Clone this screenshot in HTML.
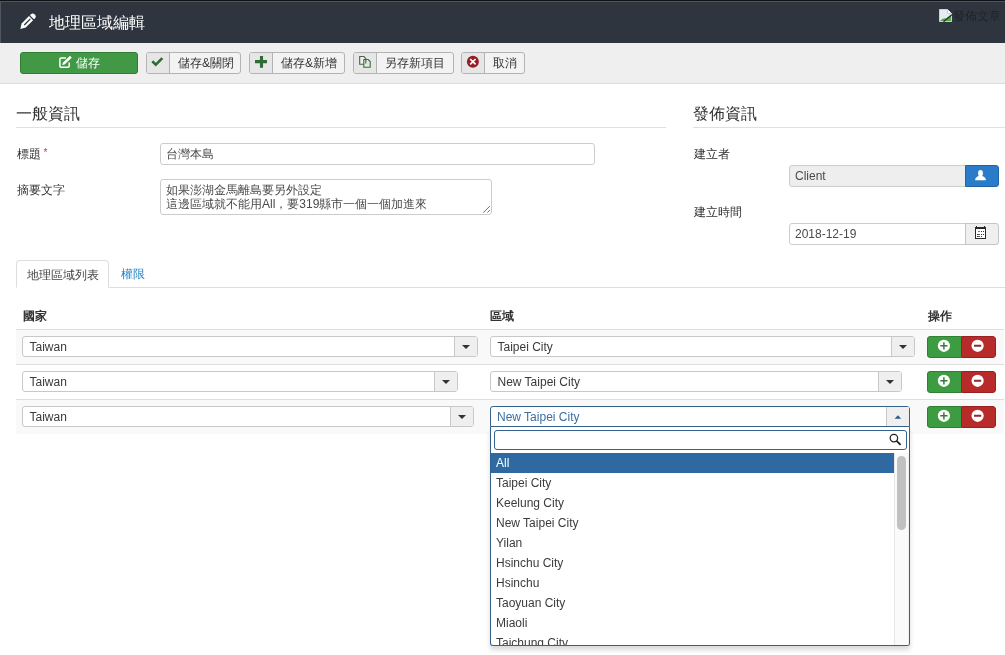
<!DOCTYPE html>
<html><head><meta charset="utf-8">
<style>
*{box-sizing:border-box}
html,body{margin:0;padding:0;width:1005px;height:655px;overflow:hidden;background:#fff}
body{font-family:"Liberation Sans",sans-serif;font-size:12px;color:#333;position:relative}
.a{position:absolute}
svg{position:absolute;display:block}
#hdr{left:0;top:0;width:1005px;height:43px;background:#2e353e;border-top:1px solid #0d1217}
#hdr .title{left:49px;top:11px;font-size:16px;color:#fff;line-height:22px;white-space:nowrap}
#tb{left:0;top:43px;width:1005px;height:41px;background:#efefef;border-bottom:1px solid #dcdcdc}
.btn{position:absolute;top:52px;height:22px;border:1px solid #b3b3b3;border-radius:3px;background:#f3f3f3;color:#333;font-size:12px;line-height:20px;white-space:nowrap;overflow:hidden}
.btn .ic{position:absolute;left:0;top:0;width:23px;height:20px;background:#e6e6e6;border-right:1px solid #b3b3b3}
.btn .tx{position:absolute;top:0}
.btn.g{background:#419945;border-color:#2f7d33;color:#fff}
.leg{font-size:15.5px;line-height:21px;color:#333;white-space:nowrap}
.hr{height:1px;background:#e0e0e0}
.lbl{line-height:16px;white-space:nowrap}
.inp{position:absolute;color:#4a4a4a;border:1px solid #ccc;border-radius:3px;background:#fff;height:22px;line-height:20px;padding-left:5px;white-space:nowrap}
.tab{left:16px;top:260px;width:93px;height:28px;border:1px solid #ddd;border-bottom-color:#fff;border-radius:4px 4px 0 0;background:#fff}
.th{font-weight:bold;line-height:16px}
.row{left:16px;width:988px;height:35px;border-top:1px solid #ddd}
.sel{position:absolute;height:21px;border:1px solid #c8c8c8;border-radius:3px;background:#fff;line-height:21px;padding-left:6.5px;color:#3a3a3a;white-space:nowrap}
.sel .arr{position:absolute;right:0;top:0;width:23px;height:19px;background:#efefef;border-left:1px solid #c8c8c8}
.sel .arr.up:after{display:none}
.sel .arr:after{content:"";position:absolute;left:7px;top:8px;border-left:4px solid transparent;border-right:4px solid transparent;border-top:4px solid #333}
.bg{position:absolute;top:0;height:22px;width:69px;border-radius:3px;overflow:hidden}
.bg svg{left:0;top:0}
.bg .p{position:absolute;left:0;top:0;width:34px;height:22px;background:#3d9b41;border:1px solid #2f8033;border-right:0;border-radius:3px 0 0 3px}
.bg .m{position:absolute;left:34px;top:0;width:35px;height:22px;background:#b72b2b;border:1px solid #992020;border-radius:0 3px 3px 0}
.drop{left:490px;top:427px;width:420px;height:219px;border:1px solid #36618c;border-top:0;background:#fff;border-radius:0 0 3px 3px;overflow:hidden;box-shadow:0 4px 5px rgba(0,0,0,.15)}
.opt{position:absolute;left:5px;height:20px;line-height:20px;white-space:nowrap;color:#3c3c3c}
</style></head><body><div id="w" style="position:absolute;left:0;top:0;width:1005px;height:655px;will-change:transform">
<div id="hdr" class="a">

  <div class="a title">地理區域編輯</div>
</div>
<svg style="left:0;top:0" width="60" height="43" viewBox="0 0 60 43"><g transform="translate(20.3,28.9) rotate(-45)"><path d="M0 0 L4.8 -2.9 L15.2 -2.9 L15.2 2.9 L4.8 2.9 Z" fill="#fff"/><path d="M16.5 -2.9 L17.6 -2.9 A2.9 2.9 0 0 1 17.6 2.9 L16.5 2.9 Z" fill="#fff"/><rect x="5.6" y="-0.65" width="8.6" height="1.3" fill="#2e343b"/></g></svg>
<div class="a" style="left:0;top:1px;width:1005px;height:1px;background:#4f555c"></div>
<div class="a" style="left:0;top:2px;width:1px;height:41px;background:#50565d"></div>
<svg style="left:939px;top:9px" width="14" height="14" viewBox="0 0 14 14"><path d="M0.5 0.5 H8.5 L12.5 4.5 V12.5 H0.5 Z" fill="#e6ecf2" stroke="#c9d0d6"/><path d="M8.5 0.5 V4.5 H12.5" fill="#fff" stroke="#c9d0d6"/><path d="M1 12 Q3.5 8.5 7 9.5 L12 6 V12 Z" fill="#5aa545"/><path d="M4.5 12.8 L12.8 5.8" stroke="#22313a" stroke-width="1.2"/></svg>
<div class="a" style="left:953px;top:9px;font-size:12px;line-height:14px;color:#1e2329;white-space:nowrap">發佈文章</div>
<div id="tb" class="a"></div>
<div class="btn g" style="left:20px;width:118px"><span class="tx" style="left:55px">儲存</span></div>
<svg style="left:58px;top:55px" width="14" height="14" viewBox="0 0 14 14"><path d="M8 3 H3.1 Q1.9 3 1.9 4.2 V11 Q1.9 12.2 3.1 12.2 H10 Q11.2 12.2 11.2 11 V7.5" fill="none" stroke="#fff" stroke-width="1.5"/><path d="M4.2 10 L4.78 7.69 L12.02 0.85 L13.78 2.75 L6.54 9.59 Z" fill="#fff"/></svg>
<div class="btn" style="left:146px;width:95px"><span class="ic"></span><span class="tx" style="left:31px">儲存&amp;關閉</span></div>
<svg style="left:148px;top:53px" width="18" height="16" viewBox="148 53 18 16"><path d="M152.3 61.3 L155.8 64.6 L162.3 58.1" fill="none" stroke="#2e6b35" stroke-width="2.6"/></svg>
<div class="btn" style="left:249px;width:96px"><span class="ic"></span><span class="tx" style="left:31px">儲存&amp;新增</span></div>
<svg style="left:250px;top:50px" width="22" height="22" viewBox="250 50 22 22"><path d="M261.5 56 V67.7 M255 61.6 H267" stroke="#2e6b35" stroke-width="3.1"/></svg>
<div class="btn" style="left:353px;width:101px"><span class="ic"></span><span class="tx" style="left:31px">另存新項目</span></div>
<svg style="left:358px;top:55px" width="14" height="14" viewBox="0 0 14 14"><path d="M1.7 1.5 H5.8 L7.8 3.5 V9.2 H1.7 Z" fill="#eef2ee"/><path d="M5.8 4.5 H10.2 L12.2 6.5 V12.2 H5.8 Z" fill="#d6f2d6"/><path d="M7.8 8.6 V3.5 L5.8 1.5 H1.7 V9.2 H5.8" fill="none" stroke="#4d5f4d" stroke-width="1.1"/><path d="M5.8 4.5 H10.2 L12.2 6.5 V12.2 H5.8 Z" fill="none" stroke="#4d5f4d" stroke-width="1.1"/></svg>
<div class="btn" style="left:461px;width:64px"><span class="ic"></span><span class="tx" style="left:31px">取消</span></div>
<svg style="left:464px;top:53px" width="18" height="18" viewBox="464 53 18 18"><circle cx="472.9" cy="61.7" r="6" fill="#9a1b24"/><path d="M470.2 59 L475.6 64.4 M475.6 59 L470.2 64.4" stroke="#fff" stroke-width="1.7"/></svg>

<!-- general -->
<div class="a leg" style="left:16px;top:103px">一般資訊</div>
<div class="a hr" style="left:16px;top:127px;width:650px"></div>
<div class="a lbl" style="left:17px;top:146px">標題</div><div class="a lbl" style="left:43.5px;top:145px;color:#d4343a;font-size:10px">*</div>
<div class="inp" style="left:160px;top:143px;width:435px">台灣本島</div>
<div class="a lbl" style="left:17px;top:182px">摘要文字</div>
<div class="inp" style="left:160px;top:179px;width:332px;height:36px;line-height:14px;padding-top:3.4px">如果澎湖金馬離島要另外設定<br>這邊區域就不能用All，要319縣市一個一個加進來</div>

<svg style="left:480px;top:203px" width="12" height="12" viewBox="480 203 12 12"><path d="M483.3 212.6 L489.8 206.1 M487.3 212.6 L489.8 210.1" stroke="#666" stroke-width="0.95"/></svg>
<!-- publishing -->
<div class="a leg" style="left:693px;top:103px">發佈資訊</div>
<div class="a hr" style="left:693px;top:127px;width:312px"></div>
<div class="a lbl" style="left:694px;top:146px">建立者</div>
<div class="inp" style="left:789px;top:165px;width:177px;background:#eee;border-radius:3px 0 0 3px">Client</div>
<div class="a" style="left:965px;top:165px;width:34px;height:22px;background:#2a7cc9;border:1px solid #1f64a6;border-radius:0 3px 3px 0"></div>
<svg style="left:970px;top:168px" width="20" height="16" viewBox="970 168 20 16"><ellipse cx="980.5" cy="173.2" rx="2.4" ry="3.2" fill="#fff"/><path d="M978.7 175.7 Q976.2 176.9 975.1 179.3 Q974.8 180.2 975.7 180.2 H985.3 Q986.2 180.2 985.9 179.3 Q984.8 176.9 982.3 175.7 Z" fill="#fff"/></svg>
<div class="a lbl" style="left:694px;top:204px">建立時間</div>
<div class="inp" style="left:789px;top:223px;width:177px;border-radius:3px 0 0 3px">2018-12-19</div>
<div class="a" style="left:965px;top:223px;width:34px;height:22px;background:#efefef;border:1px solid #c4c4c4;border-radius:0 3px 3px 0"></div>
<svg style="left:970px;top:224px" width="20" height="18" viewBox="970 224 20 18" shape-rendering="crispEdges"><rect x="976" y="229" width="9" height="9" fill="#fff"/><g fill="#2a2a2a"><rect x="975" y="227" width="11" height="2.4"/><rect x="975" y="229" width="1" height="10"/><rect x="985" y="229" width="1" height="10"/><rect x="975" y="238" width="11" height="1"/><rect x="976" y="226" width="1" height="1"/><rect x="984" y="226" width="1" height="1"/></g><g fill="#333"><rect x="978" y="231" width="2" height="1.3" fill="#777"/><rect x="981" y="231" width="1" height="1.3"/><rect x="983" y="231" width="1" height="1.3"/><rect x="976.5" y="233.5" width="1" height="1"/><rect x="978" y="233.5" width="2" height="1" fill="#555"/><rect x="981" y="233.5" width="1" height="1"/><rect x="983" y="233.5" width="1" height="1"/><rect x="976.5" y="235.8" width="1" height="1"/><rect x="978" y="235.8" width="2" height="1" fill="#555"/><rect x="981" y="235.8" width="1" height="1"/></g></svg>

<!-- tabs -->
<div class="a hr" style="left:16px;top:287px;width:989px;background:#ddd"></div>
<div class="a tab"></div>
<div class="a lbl" style="left:27px;top:266.5px;color:#444">地理區域列表</div>
<div class="a lbl" style="left:121px;top:266px;color:#2a86c6">權限</div>

<!-- table -->
<div class="a th" style="left:23px;top:308px">國家</div>
<div class="a th" style="left:490px;top:308px">區域</div>
<div class="a th" style="left:928px;top:308px">操作</div>
<div class="a row" style="top:329px;background:#f9f9f9"></div>
<div class="a row" style="top:364px;background:#fff"></div>
<div class="a row" style="top:399px;background:#f9f9f9"></div>

<div class="sel" style="left:22px;top:336px;width:456px">Taiwan<span class="arr"></span></div>
<div class="sel" style="left:490px;top:336px;width:425px">Taipei City<span class="arr"></span></div>
<div class="a" style="left:927px;top:336px"><div class="bg"><div class="p"></div><div class="m"></div><svg width="69" height="22" viewBox="0 0 69 22"><circle cx="16.9" cy="9.8" r="6.1" fill="#fff"/><path d="M16.9 6.2 V13.4 M13.3 9.8 H20.5" stroke="#2f7a35" stroke-width="1.45"/><circle cx="50.6" cy="9.8" r="6.1" fill="#fff"/><path d="M47 9.8 H54.2" stroke="#8e2a2a" stroke-width="2.1"/></svg></div></div>

<div class="sel" style="left:22px;top:371px;width:436px">Taiwan<span class="arr"></span></div>
<div class="sel" style="left:490px;top:371px;width:412px">New Taipei City<span class="arr"></span></div>
<div class="a" style="left:927px;top:371px"><div class="bg"><div class="p"></div><div class="m"></div><svg width="69" height="22" viewBox="0 0 69 22"><circle cx="16.9" cy="9.8" r="6.1" fill="#fff"/><path d="M16.9 6.2 V13.4 M13.3 9.8 H20.5" stroke="#2f7a35" stroke-width="1.45"/><circle cx="50.6" cy="9.8" r="6.1" fill="#fff"/><path d="M47 9.8 H54.2" stroke="#8e2a2a" stroke-width="2.1"/></svg></div></div>

<div class="sel" style="left:22px;top:406px;width:452px">Taiwan<span class="arr"></span></div>
<div class="sel" style="left:490px;top:406px;width:420px;border-color:#36618c;color:#3a6ea5;border-radius:3px 3px 0 0;padding-left:6px">New Taipei City<span class="arr up"></span></div>
<svg style="left:890px;top:412px" width="16" height="10" viewBox="890 412 16 10"><path d="M894.6 418.8 L897.9 415.3 L901.2 418.8 Z" fill="#2b5a8a"/></svg>

<div class="a" style="left:927px;top:406px"><div class="bg"><div class="p"></div><div class="m"></div><svg width="69" height="22" viewBox="0 0 69 22"><circle cx="16.9" cy="9.8" r="6.1" fill="#fff"/><path d="M16.9 6.2 V13.4 M13.3 9.8 H20.5" stroke="#2f7a35" stroke-width="1.45"/><circle cx="50.6" cy="9.8" r="6.1" fill="#fff"/><path d="M47 9.8 H54.2" stroke="#8e2a2a" stroke-width="2.1"/></svg></div></div>

<div class="a drop">
  <div class="a" style="left:3px;top:3px;width:413px;height:20px;border:1px solid #36618c;border-radius:3px"></div>
  <div class="a" style="left:0;top:26px;width:403px;height:20px;background:#2e6aa1"></div>
  <div class="opt" style="top:26px;color:#fff">All</div>
  <div class="opt" style="top:46px">Taipei City</div>
  <div class="opt" style="top:66px">Keelung City</div>
  <div class="opt" style="top:86px">New Taipei City</div>
  <div class="opt" style="top:106px">Yilan</div>
  <div class="opt" style="top:126px">Hsinchu City</div>
  <div class="opt" style="top:146px">Hsinchu</div>
  <div class="opt" style="top:166px">Taoyuan City</div>
  <div class="opt" style="top:186px">Miaoli</div>
  <div class="opt" style="top:206px">Taichung City</div>
  <div class="a" style="left:403px;top:26px;width:15px;height:193px;background:#fafafa;border-left:1px solid #e6e6e6;border-right:1px solid #f0f0f0"></div>
  <div class="a" style="left:406px;top:29px;width:9px;height:74px;background:#c1c1c1;border-radius:5px"></div>
</div>
<svg style="left:886px;top:431px" width="18" height="17" viewBox="886 431 18 17"><circle cx="893.9" cy="438.1" r="3.75" fill="none" stroke="#222" stroke-width="1.25"/><path d="M896.6 440.9 L900.6 444.9" stroke="#222" stroke-width="1.8"/></svg>
</div></body></html>
